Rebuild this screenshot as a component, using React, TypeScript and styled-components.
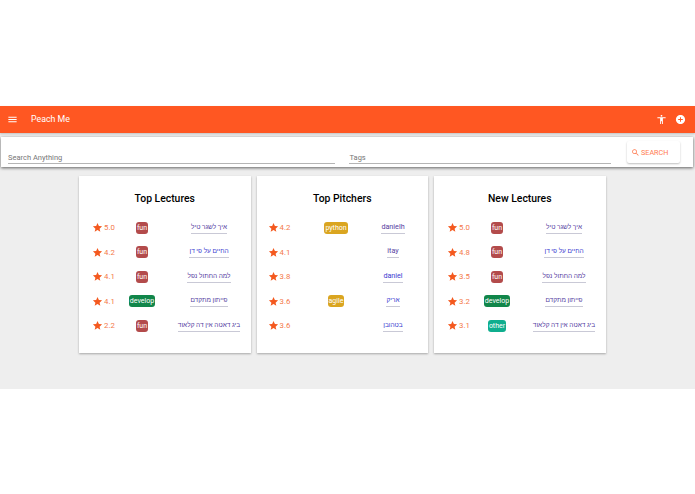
//App.tsx
import React from 'react';
import styled, { createGlobalStyle } from 'styled-components';

type Row = { score: string; tag?: string; name: string; visited?: boolean; latin?: boolean };

const tagColors: { [key: string]: string } = {
    fun: '#b34b4b',
    develop: '#11864a',
    python: '#daa520',
    agile: '#daa520',
    other: '#0fae8e',
};

const lectures: Row[] = [
    { score: '5.0', tag: 'fun', name: 'איך לשגר טיל', visited: true },
    { score: '4.2', tag: 'fun', name: 'החיים על פי דן' },
    { score: '4.1', tag: 'fun', name: 'למה החתול נפל', visited: true },
    { score: '4.1', tag: 'develop', name: 'פייתון מתקדם', visited: true },
    { score: '2.2', tag: 'fun', name: 'ביג דאטה אין דה קלאוד', visited: true },
];

const pitchers: Row[] = [
    { score: '4.2', tag: 'python', name: 'danielh', visited: true, latin: true },
    { score: '4.1', name: 'itay', visited: true, latin: true },
    { score: '3.8', name: 'daniel', latin: true },
    { score: '3.6', tag: 'agile', name: 'אריק' },
    { score: '3.6', name: 'בטהובן' },
];

const newLectures: Row[] = [
    { score: '5.0', tag: 'fun', name: 'איך לשגר טיל', visited: true },
    { score: '4.8', tag: 'fun', name: 'החיים על פי דן' },
    { score: '3.5', tag: 'fun', name: 'למה החתול נפל', visited: true },
    { score: '3.2', tag: 'develop', name: 'פייתון מתקדם', visited: true },
    { score: '3.1', tag: 'other', name: 'ביג דאטה אין דה קלאוד', visited: true },
];

const GlobalStyle = createGlobalStyle`
    body {
        margin: 0;
        background: #fff;
        font-family: Roboto, "Noto Sans", sans-serif;
    }
`;

const Page = styled.div`
    padding-top: 106px;
    height: 388px;
`;

const AppBar = styled.header`
    height: 26.5px;
    background: #ff5722;
    display: flex;
    align-items: center;
    padding: 0 7px;
    color: #fff;
    box-shadow: 0 1px 2px rgba(0, 0, 0, 0.2);
    position: relative;
`;

const BarTitle = styled.span`
    margin-left: 13px;
    font-size: 8.8px;
    font-weight: 400;
    flex: 1;
`;

const BarIcon = styled.svg`
    width: 11px;
    height: 11px;
    fill: #fff;
    display: block;
`;

const BarActions = styled.div`
    display: flex;
    gap: 8px;
    margin-right: 2px;
`;

const Main = styled.main`
    background: #eeeeee;
    height: 256.5px;
    padding-top: 4.5px;
    box-sizing: border-box;
`;

const SearchPanel = styled.div`
    margin: 0 2px 0 1px;
    height: 30px;
    background: #fff;
    box-shadow: 0 1px 3px rgba(0, 0, 0, 0.6);
    display: flex;
    padding: 4px 13px 3px 7px;
    box-sizing: border-box;
    align-items: stretch;
`;

const SearchField = styled.div<{ $width: number }>`
    width: ${({ $width }) => $width}px;
    margin-right: 14px;
    border-bottom: 1px solid #b5b5b5;
    font-size: 7.5px;
    color: #777;
    display: flex;
    align-items: flex-end;
    padding-bottom: 1px;
    box-sizing: border-box;
`;

const SearchButton = styled.div`
    margin-left: 2px;
    width: 53px;
    height: 22px;
    background: #fff;
    border-radius: 2px;
    box-shadow: 0 1px 2px rgba(0, 0, 0, 0.25);
    color: #ff7a50;
    font-size: 7.2px;
    font-weight: 400;
    display: flex;
    align-items: center;
    padding-left: 4px;
    gap: 1px;
    box-sizing: border-box;
`;

const SearchIcon = styled.svg`
    width: 9px;
    height: 9px;
    fill: #ff7a50;
`;

const Cards = styled.div`
    display: flex;
    gap: 6px;
    padding: 9px 0 0 79px;
`;

const Card = styled.section`
    width: 171.5px;
    height: 177px;
    background: #fff;
    box-shadow: 0 1px 2px rgba(0, 0, 0, 0.3);
    box-sizing: border-box;
    padding-top: 15px;
`;

const CardTitle = styled.h2`
    margin: 0 0 8.5px;
    font-size: 10.4px;
    line-height: 16px;
    font-weight: 500;
    text-align: center;
    color: #000;
`;

const TableRow = styled.div<{ $columns: string; $left: number }>`
    display: grid;
    grid-template-columns: ${({ $columns }) => $columns};
    column-gap: 8px;
    align-items: center;
    justify-items: center;
    height: 24.5px;
    padding-left: ${({ $left }) => $left}px;
`;

const Score = styled.div`
    display: flex;
    align-items: center;
    gap: 1px;
    justify-self: start;
    color: #f4794a;
    font-size: 7.8px;
    white-space: nowrap;
`;

const StarIcon = styled.svg`
    width: 11px;
    height: 11px;
    fill: #f4591f;
`;

const Tag = styled.span<{ $color: string }>`
    background: ${({ $color }) => $color};
    color: #fff;
    border-radius: 3px;
    font-size: 7px;
    line-height: 12px;
    height: 12px;
    padding: 0 1px;
`;

const NameLink = styled.a<{ $visited?: boolean; $latin?: boolean }>`
    color: ${({ $visited }) => ($visited ? '#55409f' : '#3a3ad0')};
    font-size: ${({ $latin }) => ($latin ? 7.2 : 6.5)}px;
    line-height: 10px;
    padding-bottom: 1px;
    white-space: nowrap;
    border-bottom: 1px solid #c9c9d6;
    cursor: pointer;
`;

const TopCard: React.FC<{ title: string; rows: Row[]; columns: string; left: number }> = ({ title, rows, columns, left }) => {
    return (
        <Card>
            <CardTitle>{title}</CardTitle>
            {rows.map((row, index) => (
                <TableRow key={index} $columns={columns} $left={left}>
                    <Score>
                        <StarIcon viewBox="0 0 24 24">
                            <path d="M12 17.27L18.18 21l-1.64-6.47L22 9.24l-6.91-.6L12 2 9.09 8.64 2 9.24l5.46 5.29L5.82 21z" />
                        </StarIcon>
                        {row.score}
                    </Score>
                    {row.tag ? <Tag $color={tagColors[row.tag]}>{row.tag}</Tag> : <span />}
                    <NameLink $visited={row.visited} $latin={row.latin} dir="rtl">{row.name}</NameLink>
                </TableRow>
            ))}
        </Card>
    );
};

export default function App() {
    return (
        <Page>
            <GlobalStyle />
            <AppBar>
                <BarIcon viewBox="0 0 24 24">
                    <path d="M3 18h18v-2H3v2zm0-5h18v-2H3v2zm0-7v2h18V6H3z" />
                </BarIcon>
                <BarTitle>Peach Me</BarTitle>
                <BarActions>
                    <BarIcon viewBox="0 0 24 24">
                        <path d="M12 2c1.1 0 2 .9 2 2s-.9 2-2 2-2-.9-2-2 .9-2 2-2zm9 7h-6v13h-2v-6h-2v6H9V9H3V7h18v2z" />
                    </BarIcon>
                    <BarIcon viewBox="0 0 24 24">
                        <path d="M12 2C6.48 2 2 6.48 2 12s4.48 10 10 10 10-4.48 10-10S17.52 2 12 2zm5 11h-4v4h-2v-4H7v-2h4V7h2v4h4v2z" />
                    </BarIcon>
                </BarActions>
            </AppBar>
            <Main>
                <SearchPanel>
                    <SearchField $width={328}>Search Anything</SearchField>
                    <SearchField $width={262}>Tags</SearchField>
                    <SearchButton>
                        <SearchIcon viewBox="0 0 24 24">
                            <path d="M15.5 14h-.79l-.28-.27C15.41 12.59 16 11.11 16 9.5 16 5.91 13.09 3 9.5 3S3 5.91 3 9.5 5.91 16 9.5 16c1.61 0 3.09-.59 4.23-1.57l.27.28v.79l5 4.99L20.49 19l-4.99-5zm-6 0C7.01 14 5 11.99 5 9.5S7.01 5 9.5 5 14 7.01 14 9.5 11.99 14 9.5 14z" />
                        </SearchIcon>
                        SEARCH
                    </SearchButton>
                </SearchPanel>
                <Cards>
                    <TopCard title="Top Lectures" rows={lectures} columns="22px 40px 78px" left={13} />
                    <TopCard title="Top Pitchers" rows={pitchers} columns="40.5px 40px 58px" left={11} />
                    <TopCard title="New Lectures" rows={newLectures} columns="22px 40px 78px" left={13} />
                </Cards>
            </Main>
        </Page>
    );
}
